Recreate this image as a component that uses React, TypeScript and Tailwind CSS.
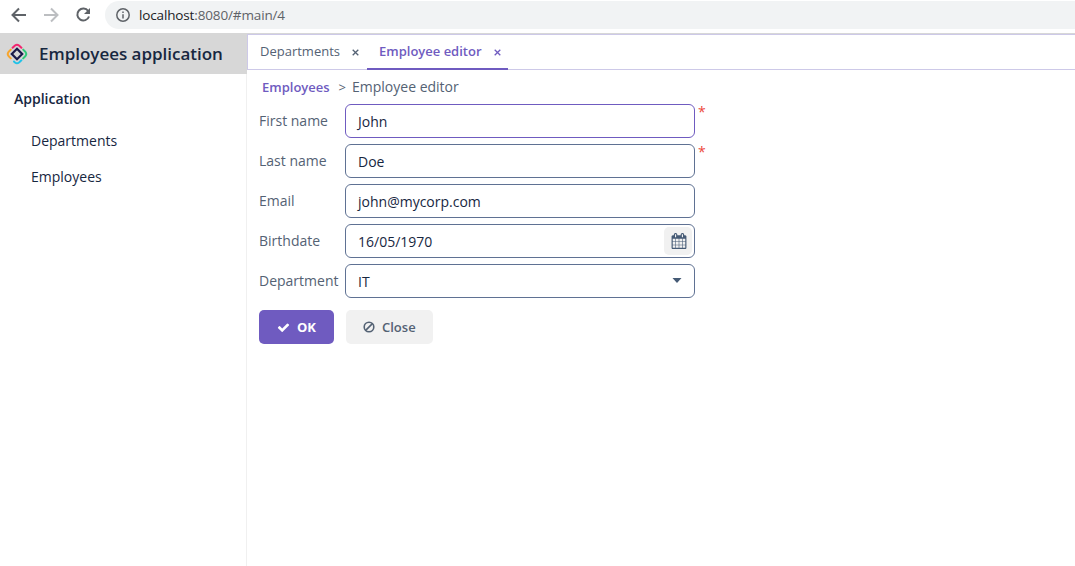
import React from "react";

function BrowserBar() {
  return (
    <div className="flex h-[33px] shrink-0 items-start bg-white">
      <svg className="ml-[10px] mt-[6px] h-[18px] w-[18px]" viewBox="0 0 18 18" fill="none" stroke="#5f6368" strokeWidth="2">
        <path d="M16 9H3M9 2.5 2.5 9 9 15.5" />
      </svg>
      <svg className="ml-[15px] mt-[6px] h-[18px] w-[18px]" viewBox="0 0 18 18" fill="none" stroke="#bcbec1" strokeWidth="2">
        <path d="M1 9h13M8 2.5 14.5 9 8 15.5" />
      </svg>
      <svg className="ml-[13px] mt-[6px] h-[18px] w-[18px]" viewBox="0 0 18 18" fill="none">
        <path d="M14.2 5A6 6 0 1 0 15 10.5" stroke="#5f6368" strokeWidth="2" />
        <path d="M16 2v6h-6z" fill="#5f6368" />
      </svg>
      <div className="ml-[13px] mt-px flex h-7 flex-1 items-center rounded-l-full bg-[#f1f3f4] pl-[11px]">
        <svg className="h-[14px] w-[14px]" viewBox="0 0 14 14" fill="none" stroke="#5f6368" strokeWidth="1.5">
          <circle cx="7" cy="7" r="6.2" />
          <path d="M7 6.2v4.2M7 3.4v1.6" />
        </svg>
        <span className="ml-[9px] text-[13.5px] leading-7 tracking-[-0.14px] text-[#5f6368]">
          <span className="text-[#202124]">localhost</span>:8080/#main/4
        </span>
      </div>
    </div>
  );
}

function Logo() {
  return (
    <svg className="ml-[6px] h-[22px] w-[22px]" viewBox="0 0 22 22" fill="none" strokeWidth="2" strokeLinecap="round" strokeLinejoin="round">
      <path d="M6.6 4.8 9 2.5Q11 1 13 2.5L15.4 4.8" stroke="#f2266f" />
      <path d="M17.2 6.6 19.5 9Q21 11 19.5 13L17.2 15.4" stroke="#2fc979" />
      <path d="M15.4 17.2 13 19.5Q11 21 9 19.5L8 18.5" stroke="#21c2e8" />
      <path d="M4.8 15.4 2.5 13Q1 11 2.5 9L4.8 6.6" stroke="#f7a52d" />
      <path d="M11 5.8 16.2 11 11 16.2 5.8 11Z" stroke="#1a1b4b" strokeWidth="2.2" strokeLinejoin="miter" />
    </svg>
  );
}

function Cross() {
  return (
    <svg className="h-[7px] w-[7px]" viewBox="0 0 7 7" fill="none" stroke="currentColor" strokeWidth="1.3">
      <path d="m.7.7 5.6 5.6M6.3.7.7 6.3" />
    </svg>
  );
}

function CalendarIcon() {
  return (
    <svg className="ml-px h-4 w-4" viewBox="0 0 1792 1792" fill="#455a75">
      <path d="M192 1664h288v-288h-288v288zm352 0h320v-288h-320v288zm-352-352h288v-320h-288v320zm352 0h320v-320h-320v320zm-352-384h288v-288h-288v288zm736 736h320v-288h-320v288zm-384-736h320v-288h-320v288zm768 736h288v-288h-288v288zm-384-352h320v-320h-320v320zm-352-864v-288q0-13-9.5-22.5t-22.5-9.5h-64q-13 0-22.5 9.5t-9.5 22.5v288q0 13 9.5 22.5t22.5 9.5h64q13 0 22.5-9.5t9.5-22.5zm736 864h288v-320h-288v320zm-384-384h320v-288h-320v288zm384 0h288v-288h-288v288zm32-480v-288q0-13-9.5-22.5t-22.5-9.5h-64q-13 0-22.5 9.5t-9.5 22.5v288q0 13 9.5 22.5t22.5 9.5h64q13 0 22.5-9.5t9.5-22.5zm384-64v1280q0 52-38 90t-90 38h-1408q-52 0-90-38t-38-90v-1280q0-52 38-90t90-38h128v-96q0-66 47-113t113-47h64q66 0 113 47t47 113v96h384v-96q0-66 47-113t113-47h64q66 0 113 47t47 113v96h128q52 0 90 38t38 90z" />
    </svg>
  );
}

type FieldProps = {
  label: string;
  value: string;
  required?: boolean;
  focused?: boolean;
  children?: React.ReactNode;
};

function Field({ label, value, required, focused, children }: FieldProps) {
  return (
    <div className="flex h-[34px] items-start">
      <span className="w-[86px] shrink-0 whitespace-nowrap text-sm leading-[34px] text-[#546274]">{label}</span>
      <div
        className={`flex h-[34px] w-[350px] items-center justify-between rounded-md border bg-white pl-3 pr-[2px] ${
          focused ? "border-[#6f5bc0]" : "border-[#5f7193]"
        }`}
      >
        <span className="pt-[2px] text-sm leading-5 text-[#17273f]">{value}</span>
        {children}
      </div>
      {required && <span className="ml-[3px] text-sm leading-4 text-[#ed473b]">*</span>}
    </div>
  );
}

export default function App() {
  return (
    <div className="flex h-[566px] w-[1075px] flex-col overflow-hidden bg-white font-['Open_Sans',sans-serif]">
      <BrowserBar />
      <div className="flex min-h-0 flex-1">
        <aside className="flex w-[247px] shrink-0 flex-col border-r border-[#f0f0f0]">
          <div className="-mr-px flex h-[41px] items-center bg-[#d7d7d7]">
            <Logo />
            <h1 className="ml-[11px] whitespace-nowrap text-[17px] font-semibold leading-6 tracking-[-0.02px] text-[#17273f]">Employees application</h1>
          </div>
          <h2 className="ml-[14px] mt-[15px] text-sm font-semibold leading-5 text-[#17273f]">Application</h2>
          <nav className="ml-[31px] mt-[14px] flex flex-col text-sm leading-9 text-[#17273f]">
            <span>Departments</span>
            <span>Employees</span>
          </nav>
        </aside>
        <main className="flex min-w-0 flex-1 flex-col">
          <div className="h-px bg-[#d7d7d7]" />
          <div className="flex h-9 border-b border-l border-t border-[#cdc9e8] text-[13px] leading-8">
            <div className="flex w-[119px] shrink-0 items-start pl-3 text-[#546274]">
              <span>Departments</span>
              <span className="ml-3 mt-[14px]"><Cross /></span>
            </div>
            <div className="flex h-[35px] w-[141px] shrink-0 items-start border-b-2 border-[#6f5bc0] pl-3 text-[#6f5bc0]">
              <span className="whitespace-nowrap font-semibold">Employee editor</span>
              <span className="ml-3 mt-[14px]"><Cross /></span>
            </div>
          </div>
          <div className="ml-[15px] mt-[7px] flex h-5 items-center text-sm text-[#546274]">
            <span className="text-[13px] font-semibold text-[#6f5bc0]">Employees</span>
            <span className="ml-[9px] text-[13px]">&gt;</span>
            <span className="ml-[6px]">Employee editor</span>
          </div>
          <form className="ml-3 mt-[7px] flex flex-col gap-[6px]">
            <Field label="First name" value="John" required focused />
            <Field label="Last name" value="Doe" required />
            <Field label="Email" value="john@mycorp.com" />
            <Field label="Birthdate" value="16/05/1970">
              <span className="flex h-7 w-7 items-center justify-center rounded-[5px] bg-[#f1f1f1]"><CalendarIcon /></span>
            </Field>
            <Field label="Department" value="IT">
              <svg className="mb-px mr-[10px] h-[5px] w-[10px]" viewBox="0 0 10 5"><path d="M.5 0h9L5 5z" fill="#455a75" /></svg>
            </Field>
            <div className="mt-[6px] flex gap-3 text-[13px] font-semibold leading-[34px]">
              <button type="button" className="flex h-[34px] w-[75px] items-center rounded-[5px] bg-[#6f5bc0] pl-[18px] font-bold text-white">
                <svg className="h-[13px] w-[13px]" viewBox="0 0 1792 1792" fill="currentColor">
                  <path d="M1671 566q0 40-28 68l-724 724-136 136q-28 28-68 28t-68-28l-136-136-362-362q-28-28-28-68t28-68l136-136q28-28 68-28t68 28l294 295 656-657q28-28 68-28t68 28l136 136q28 28 28 68z" />
                </svg>
                <span className="ml-[7px]">OK</span>
              </button>
              <button type="button" className="flex h-[34px] w-[87px] items-center rounded-[5px] bg-[#f1f1f1] pl-[17px] text-[#546274]">
                <svg className="h-3 w-3" viewBox="0 0 12 12" fill="none" stroke="currentColor" strokeWidth="1.6">
                  <circle cx="6" cy="6" r="4.8" />
                  <path d="m9.4 2.6-6.8 6.8" />
                </svg>
                <span className="ml-[7px]">Close</span>
              </button>
            </div>
          </form>
        </main>
      </div>
    </div>
  );
}
